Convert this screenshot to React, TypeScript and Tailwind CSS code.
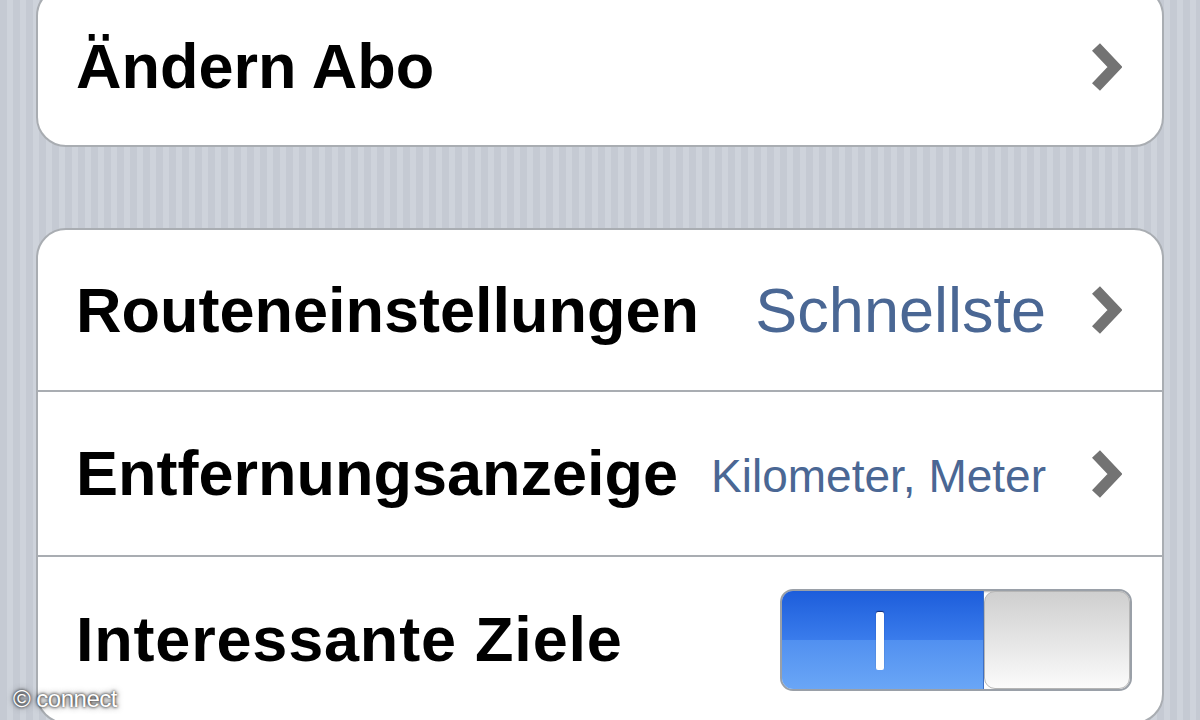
import React from 'react';

const Chevron = () => (
  <svg width="32" height="48" viewBox="0 0 32 48" className="shrink-0">
    <path d="M6 4 L25 24 L6 44" fill="none" stroke="#737373" strokeWidth="11" strokeLinejoin="miter" />
  </svg>
);

interface RowProps {
  label: string;
  value?: string;
  valueSize?: string;
  height: string;
}

const Row: React.FC<RowProps> = ({ label, value, valueSize, height }) => (
  <div className={`${height} flex items-center pl-[38px] pr-[40px] border-b-2 border-[#a9adb2]`}>
    <span className="font-bold text-[63px] text-black leading-none">{label}</span>
    <div className="flex-1" />
    {value && (
      <span className={`${valueSize} text-[#4a6794] leading-none mr-[44px]`}>{value}</span>
    )}
    <Chevron />
  </div>
);

const Toggle = () => (
  <div className="w-[352px] h-[102px] rounded-[13px] border-2 border-[#9aa0a8] overflow-hidden flex shadow-[inset_0_1px_2px_rgba(0,0,0,0.3)]">
    <div className="w-[202px] h-full flex flex-col relative border-r border-[#3d6fc4]">
      <div className="h-1/2 bg-gradient-to-b from-[#1d5ddb] to-[#3a7cec]" />
      <div className="h-1/2 bg-gradient-to-b from-[#5190f0] to-[#6aa6f6]" />
      <div className="absolute left-[94px] top-[21px] w-[8px] h-[58px] bg-white rounded-[2px] shadow-[0_-1px_1px_rgba(0,0,40,0.6)]" />
    </div>
    <div className="flex-1 h-full bg-gradient-to-b from-[#cfcfcf] to-[#fbfbfb] rounded-[11px] border border-[#b5b5b5]" />
  </div>
);

export default function App() {
  return (
    <div
      className="w-[1200px] h-[720px] overflow-hidden relative px-[36px] bg-[repeating-linear-gradient(90deg,#c5cad3_0px,#c5cad3_7px,#ced3db_7px,#ced3db_13px)]"
      style={{ fontFamily: '"Liberation Sans", Arial, Helvetica, sans-serif' }}
    >
      <div className="mt-[-14px] h-[161px] bg-white rounded-[30px] border-2 border-[#a9adb2] flex items-center pl-[38px] pr-[40px]">
        <span className="font-bold text-[63px] text-black leading-none">Ändern Abo</span>
        <div className="flex-1" />
        <Chevron />
      </div>

      <div className="mt-[81px] bg-white rounded-[30px] border-2 border-[#a9adb2] overflow-hidden">
        <Row label="Routeneinstellungen" value="Schnellste" valueSize="text-[63px]" height="h-[162px]" />
        <Row label="Entfernungsanzeige" value="Kilometer, Meter" valueSize="text-[46px] translate-y-[2px]" height="h-[165px]" />
        <div className="h-[165px] flex items-center pl-[38px] pr-[30px]">
          <span className="font-bold text-[63px] text-black leading-none tracking-[0.8px]">Interessante Ziele</span>
          <div className="flex-1" />
          <Toggle />
        </div>
      </div>

      <div className="absolute left-[13px] bottom-[9px] text-white text-[24px] leading-none tracking-[-0.5px] [text-shadow:0_0_3px_rgba(0,0,0,1),0_0_6px_rgba(0,0,0,0.7)]">
        © connect
      </div>
    </div>
  );
}
